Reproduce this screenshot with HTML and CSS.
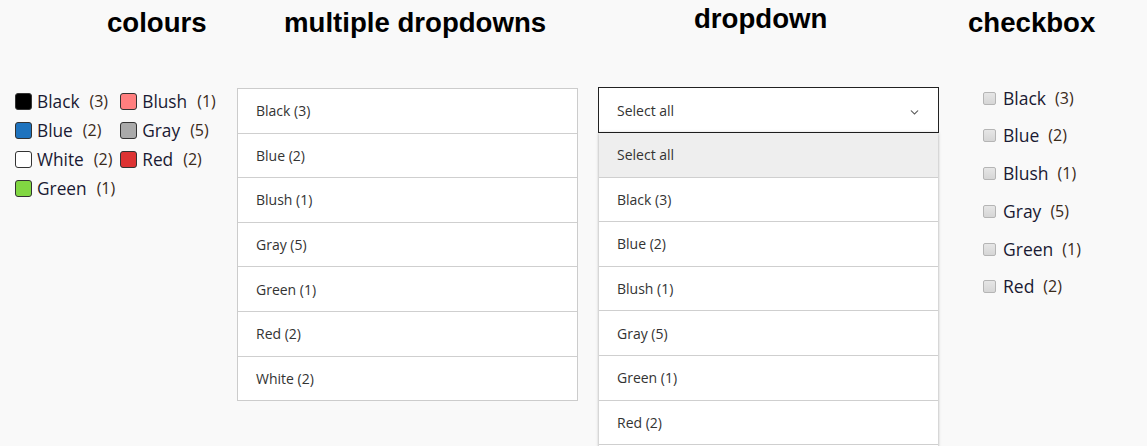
FILE: index.html
```html
<!DOCTYPE html>
<html lang="en">
<head>
<meta charset="utf-8">
<title>Filters</title>
<link rel="stylesheet" href="styles.css">
</head>
<body>
<div class="page">
  <section class="col col-colours">
    <h2 class="heading">colours</h2>
    <div class="swatches">
      <div class="swatch-item"><span class="swatch sw-black"></span><span class="sw-name">Black</span><span class="sw-count">(3)</span></div>
      <div class="swatch-item"><span class="swatch sw-blush"></span><span class="sw-name">Blush</span><span class="sw-count">(1)</span></div>
      <div class="swatch-item"><span class="swatch sw-blue"></span><span class="sw-name">Blue</span><span class="sw-count">(2)</span></div>
      <div class="swatch-item"><span class="swatch sw-gray"></span><span class="sw-name">Gray</span><span class="sw-count">(5)</span></div>
      <div class="swatch-item"><span class="swatch sw-white"></span><span class="sw-name">White</span><span class="sw-count">(2)</span></div>
      <div class="swatch-item"><span class="swatch sw-red"></span><span class="sw-name">Red</span><span class="sw-count">(2)</span></div>
      <div class="swatch-item"><span class="swatch sw-green"></span><span class="sw-name">Green</span><span class="sw-count">(1)</span></div>
    </div>
  </section>

  <section class="col col-multi">
    <h2 class="heading">multiple dropdowns</h2>
    <ul class="listbox">
      <li>Black (3)</li>
      <li>Blue (2)</li>
      <li>Blush (1)</li>
      <li>Gray (5)</li>
      <li>Green (1)</li>
      <li>Red (2)</li>
      <li>White (2)</li>
    </ul>
  </section>

  <section class="col col-drop">
    <h2 class="heading">dropdown</h2>
    <div class="dropdown">
      <div class="select">
        <span>Select all</span>
        <svg class="chevron" width="9" height="6" viewBox="0 0 9 6"><path d="M0.5 0.8 L4.5 4.8 L8.5 0.8 L7.6 0.2 L4.5 3.2 L1.4 0.2 Z" fill="#555"/></svg>
      </div>
      <ul class="options">
        <li class="active">Select all</li>
        <li>Black (3)</li>
        <li>Blue (2)</li>
        <li>Blush (1)</li>
        <li>Gray (5)</li>
        <li>Green (1)</li>
        <li>Red (2)</li>
      </ul>
    </div>
  </section>

  <section class="col col-check">
    <h2 class="heading">checkbox</h2>
    <ul class="checks">
      <li><span class="cb"></span><span class="sw-name">Black</span><span class="sw-count">(3)</span></li>
      <li><span class="cb"></span><span class="sw-name">Blue</span><span class="sw-count">(2)</span></li>
      <li><span class="cb"></span><span class="sw-name">Blush</span><span class="sw-count">(1)</span></li>
      <li><span class="cb"></span><span class="sw-name">Gray</span><span class="sw-count">(5)</span></li>
      <li><span class="cb"></span><span class="sw-name">Green</span><span class="sw-count">(1)</span></li>
      <li><span class="cb"></span><span class="sw-name">Red</span><span class="sw-count">(2)</span></li>
    </ul>
  </section>
</div>
</body>
</html>
```

FILE: styles.css
```css
html, body {
  margin: 0;
  padding: 0;
  background: #f9f9f9;
  height: 100%;
  overflow: hidden;
}
body {
  font-family: "Open Sans", "Noto Sans", sans-serif;
  color: #222;
}
.page {
  display: flex;
  align-items: flex-start;
}
.col {
  display: flex;
  flex-direction: column;
}
.heading {
  margin: 0;
  font-family: "Liberation Sans", Arial, sans-serif;
  font-weight: bold;
  font-size: 27.6px;
  line-height: 32px;
  color: #000;
  padding-top: 7px;
  white-space: nowrap;
}
.col-colours { width: 222px; padding-left: 15px; }
.col-colours .heading { margin-left: 92px; }
.col-multi { width: 341px; }
.col-multi .heading { margin-left: 47px; }
.col-drop { width: 341px; margin-left: 20px; }
.col-drop .heading { margin-left: 96px; padding-top: 3px; padding-bottom: 4px; }
.col-check { margin-left: 22px; padding-left: 22px; }
.col-check .heading { margin-left: -15px; }

/* colours */
.swatches {
  margin-top: 50px;
  display: grid;
  grid-template-columns: auto auto;
  justify-content: start;
  column-gap: 5px;
  row-gap: 4px;
}
.swatch-item {
  display: flex;
  align-items: center;
  font-size: 17.3px;
  line-height: 25px;
  color: #1a1a33;
  white-space: nowrap;
}
.swatch {
  width: 15px;
  height: 15px;
  border: 1px solid #333;
  border-radius: 3px;
  margin-right: 5px;
  flex: none;
}
.sw-black { background: #000; }
.sw-blush { background: #ff7f7f; }
.sw-blue { background: #1e73be; }
.sw-gray { background: #aaaaaa; }
.sw-white { background: #fff; }
.sw-red { background: #dd3333; }
.sw-green { background: #81d742; }
.sw-count {
  margin-left: 10px;
  font-size: 16px;
  color: #3a2a1a;
}

/* multiple list */
.listbox {
  list-style: none;
  margin: 49px 0 0;
  padding: 0;
  background: #fff;
  border: 1px solid #ccc;
}
.listbox li,
.options li {
  font-size: 14px;
  line-height: 22px;
  padding: 11.3px 18px 10.3px;
  border-bottom: 1px solid #cfcfcf;
  color: #333;
}
.listbox li:last-child { border-bottom: none; }

/* dropdown */
.dropdown {
  margin-top: 48px;
}
.select {
  display: flex;
  align-items: center;
  justify-content: space-between;
  height: 44px;
  padding: 0 19px 0 18px;
  border: 1px solid #222;
  background: #fff;
  font-size: 14px;
  color: #333;
}
.chevron { margin-top: 5px; }
.options {
  list-style: none;
  margin: 0 1px;
  padding: 0 0 20px;
  background: #fff;
  box-shadow: 0 0 3px rgba(0,0,0,0.35);
}
.options li.active { background: #eeeeee; }

/* checkbox */
.checks {
  list-style: none;
  margin: 46.5px 0 0;
  padding: 0;
}
.checks li {
  display: flex;
  align-items: center;
  font-size: 17.5px;
  line-height: 25px;
  margin-bottom: 12.8px;
  color: #1a1a33;
}
.cb {
  width: 11px;
  height: 11px;
  border: 1px solid #b5b5b5;
  border-radius: 2px;
  background: linear-gradient(#e6e6e6, #d6d6d6);
  margin-right: 7px;
  flex: none;
}
.checks .sw-count { margin-left: 9px; }
```
